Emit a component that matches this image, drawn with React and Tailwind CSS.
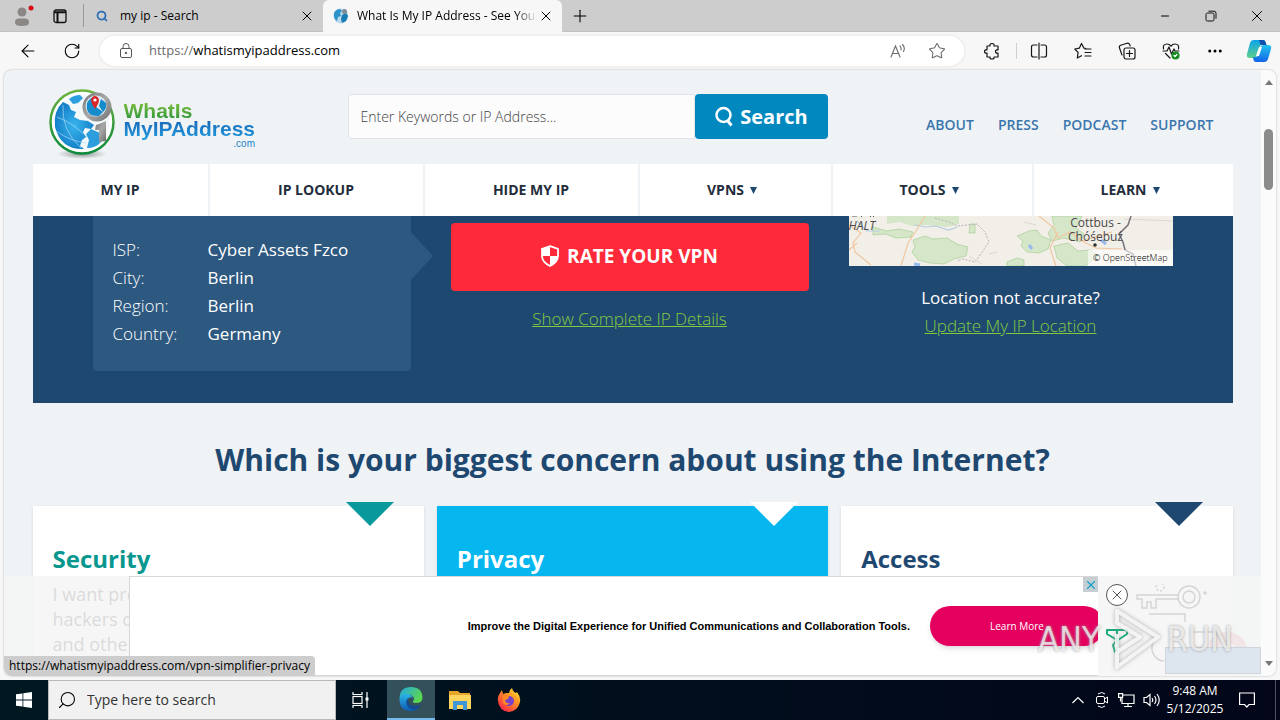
import {
  ArrowLeft,
  RotateCw,
  Star,
  Plus,
  X,
  Minus,
  MoreHorizontal,
  Search,
} from "lucide-react";

const navItems = [
  { label: "MY IP" },
  { label: "IP LOOKUP" },
  { label: "HIDE MY IP" },
  { label: "VPNS", menu: true },
  { label: "TOOLS", menu: true },
  { label: "LEARN", menu: true },
];

const ipDetails = [
  ["ISP:", "Cyber Assets Fzco"],
  ["City:", "Berlin"],
  ["Region:", "Berlin"],
  ["Country:", "Germany"],
];

const cards = [
  { title: "Security", card: "bg-white", text: "text-[#07978f]", arrow: "fill-[#07999b]", lines: ["I want pro", "hackers on", "and other"] },
  { title: "Privacy", card: "bg-[#05b6ef]", text: "text-white", arrow: "fill-white", lines: [] },
  { title: "Access", card: "bg-white", text: "text-[#1f4871]", arrow: "fill-[#1f4871]", lines: [] },
];

function GlobeIcon({ className }) {
  return (
    <svg className={className} viewBox="0 0 16 16">
      <circle cx="8" cy="8" r="7.5" fill="#b9d9ec" />
      <path d="M1 5 Q3 1 7 1 L9 3 7 5 8 8 5 9 4 13 Q0 10 1 5Z" fill="#2b93c9" />
      <path d="M9 7 L13 5 15 8 13 13 9 15 8 11Z" fill="#187bb4" />
      <circle cx="11.5" cy="3.5" r="2.5" fill="#7b8d97" />
    </svg>
  );
}

// ---------- Browser chrome ----------

function TabBar() {
  return (
    <div className="h-8 shrink-0 bg-[#cdcdcd] border-b border-[#c2c2c2] flex items-stretch">
      <button aria-label="Profile" className="w-11 flex items-center justify-center">
        <svg className="w-7 h-7" viewBox="0 0 28 28">
          <circle cx="14" cy="10" r="4.5" fill="#8b8784" />
          <path d="M7 20.500q0-4 4-4h6q4 0 4 4 0 3.500-7 3.500t-7-3.500Z" fill="#8b8784" />
          <circle cx="23" cy="6" r="2.500" fill="#d90a12" />
        </svg>
      </button>
      <button aria-label="Tab actions" className="w-8 flex items-center justify-center">
        <svg className="w-4 h-4" viewBox="0 0 16 16" fill="none" stroke="#111" strokeWidth="1.300">
          <rect x="2" y="2" width="12" height="12.500" rx="2" />
          <path d="M2 4.200h12M5.500 5v9" strokeWidth="2" />
        </svg>
      </button>
      <div className="w-60 my-1 ml-[7px] border-l border-[#999] flex items-center pl-2">
        <Search className="w-3 h-3 mx-1 text-[#2a6db5]" strokeWidth={3.5} />
        <span className="flex-1 pl-2 text-xs">my ip - Search</span>
        <button aria-label="Close tab" className="pr-2"><X className="w-4 h-4" strokeWidth={1.5} /></button>
      </div>
      <div className="w-[239px] -mb-px bg-[#f7f7f7] rounded-t-md flex items-center pl-1.5">
        <GlobeIcon className="w-4 h-4 ml-1 shrink-0" />
        <span className="flex-1 ml-2 text-xs whitespace-nowrap overflow-hidden [mask-image:linear-gradient(to_right,black_88%,transparent)]">
          What Is My IP Address - See Your
        </span>
        <button aria-label="Close tab" className="pl-px pr-2"><X className="w-4 h-4" strokeWidth={1.5} /></button>
      </div>
      <button aria-label="New tab" className="w-9 flex items-center justify-center">
        <Plus className="w-5 h-5" strokeWidth={1.3} />
      </button>
      <div className="ml-auto flex">
        <button aria-label="Minimize" className="w-[46px] flex items-center justify-center"><Minus className="w-3 h-3" strokeWidth={2} /></button>
        <button aria-label="Restore" className="w-[46px] flex items-center justify-center">
          <svg className="w-3 h-3" viewBox="0 0 12 12" fill="none" stroke="#111">
            <rect x="1" y="3" width="8" height="8" rx="1.500" />
            <path d="M3.500 1.200h5.500q2 0 2 2v5.500" />
          </svg>
        </button>
        <button aria-label="Close" className="w-[46px] flex items-center justify-center"><X className="w-[18px] h-[18px]" strokeWidth={1.3} /></button>
      </div>
    </div>
  );
}

function ToolIcon({ label, children }) {
  return (
    <button aria-label={label} className="w-11 flex items-center justify-center">
      <svg className="w-[18px] h-[18px]" viewBox="0 0 18 18" fill="none" stroke="#161616" strokeWidth="1.200" strokeLinecap="round" strokeLinejoin="round">
        {children}
      </svg>
    </button>
  );
}

function Toolbar() {
  return (
    <div className="h-[38px] shrink-0 flex items-stretch pl-1.5">
      <button aria-label="Back" className="w-11 flex items-center justify-center"><ArrowLeft className="w-5 h-5" strokeWidth={1.3} /></button>
      <button aria-label="Refresh" className="w-11 flex items-center justify-center"><RotateCw className="w-[18px] h-[18px]" strokeWidth={1.5} /></button>
      <div className="flex-1 my-1 ml-1.5 px-[18px] bg-white rounded-full ring-2 ring-[#f0f0f0] flex items-center">
        <svg className="w-4 h-4 shrink-0" viewBox="0 0 16 16" fill="none" stroke="#555">
          <rect x="2.500" y="5.500" width="11" height="9" rx="1.500" />
          <path d="M5 5.500V3.500a3 3 0 0 1 6 0v2" />
          <circle cx="8" cy="10" r=".8" fill="#555" />
        </svg>
        <div className="flex-1 ml-[15px] flex items-center text-[13px]">
          <span className="text-[#6b6b6b]">https://</span>
          <input aria-label="Address" defaultValue="whatismyipaddress.com" className="flex-1 outline-none text-black" />
        </div>
        <button aria-label="Read aloud" className="mr-[22px]">
          <svg className="w-4 h-4" viewBox="0 0 16 16" fill="none" stroke="#6a6a6a" strokeWidth="1.100" strokeLinecap="round">
            <path d="M1 14L5.500 3 10 14M2.500 10.500h6M10 3q1.500 1.500 1 4M12.500 1.500q3 3 1 7" />
          </svg>
        </button>
        <button aria-label="Add to favorites"><Star className="w-[18px] h-[18px] text-[#6a6a6a]" strokeWidth={1.4} /></button>
      </div>
      <div className="flex ml-1.5">
        <ToolIcon label="Extensions">
          <path d="M4 4h3q-.5-2.500 2-2.500T11 4h4v4q-2.500-.5-2.500 1.500t2.500 1.500v4h-4q.5 2-2 2t-2-2H4v-4q-2.500.5-2.500-1.500T4 8Z" />
        </ToolIcon>
        <div className="w-px h-4 my-auto ml-0.5 bg-[#cfcfcf]" />
        <ToolIcon label="Split screen">
          <path d="M7 3H3.500Q1.500 3 1.500 5v8q0 2 2 2H7M11 3h3.500q2 0 2 2v8q0 2-2 2H11M9 1v16" />
        </ToolIcon>
        <ToolIcon label="Favorites">
          <path d="M12 6.500l-2-.3L7.500 1.500 5.300 6.200.8 7l3.300 3.400L3.300 16l4.200-2.300M11 7h6M11 10.500h6M11 14h6" />
        </ToolIcon>
        <ToolIcon label="Collections">
          <rect x="6" y="6" width="11" height="11" rx="2" />
          <path d="M11.500 8.500v6M8.500 11.500h6M4 13L1.500 6q-.7-2 1.200-2.800L9 1.300q2-.5 2.700 1.300l.5 1.400" />
        </ToolIcon>
        <ToolIcon label="Browser essentials">
          <path d="M1.500 7Q.500 2 5 2q2.500 0 4 2.200Q10.500 2 13 2q4.500 0 3.500 5M1 9h4l2-4 2.500 7L12 7l1 2h4M3.500 11.500L8 16" />
          <circle cx="13.500" cy="13.500" r="3.500" fill="#168b22" stroke="#168b22" />
          <path d="M12 13.500l1 1 2-2" stroke="white" />
        </ToolIcon>
        <button aria-label="Menu" className="w-11 flex items-center justify-center"><MoreHorizontal className="w-[18px] h-[18px]" strokeWidth={2} /></button>
        <button aria-label="Copilot" className="w-[43px] flex items-center justify-center">
          <svg className="w-7 h-7" viewBox="0 0 28 28">
            <defs>
              <linearGradient id="cpA" x1="0" y1="0" x2="0" y2="1"><stop offset="0" stopColor="#0aa3ea" /><stop offset="1" stopColor="#5fd08a" /></linearGradient>
              <linearGradient id="cpB" x1="0" y1="0" x2="0" y2="1"><stop offset="0" stopColor="#22c3f0" /><stop offset="1" stopColor="#1464e8" /></linearGradient>
            </defs>
            <path d="M9 3h9q2 0 2.500 2l1 3h-6l-3 10q-1 3-4 3H5q-4 0-3-4L5 6q1-3 4-3Z" fill="url(#cpA)" />
            <path d="M14 3h4q2 0 2.500 2l1 3h-6Z" fill="#134fae" />
            <path d="M19 25h-8q-2 0-2.500-2L8 20h4l3-9q1-3 4-3h4q4 0 3 4l-3 10q-1 3-4 3Z" fill="url(#cpB)" />
            <path d="M14 10h3l-3 9h-3Z" fill="white" />
          </svg>
        </button>
      </div>
    </div>
  );
}

// ---------- Web page ----------

function Logo() {
  return (
    <a href="#home" className="flex items-start pl-3.5 pt-[17px] font-['Liberation_Sans']">
      <svg className="w-[72px] h-[74px]" viewBox="0 0 72 74">
        <defs>
          <linearGradient id="ring" x1="0" y1="0" x2="0" y2="1"><stop offset="0" stopColor="#6cb33f" /><stop offset="1" stopColor="#0c8a3c" /></linearGradient>
          <radialGradient id="sea"><stop offset="0" stopColor="#38b5ee" /><stop offset="1" stopColor="#1580c9" /></radialGradient>
          <linearGradient id="metal" x1="0" y1="0" x2="1" y2="1"><stop offset="0" stopColor="#777" /><stop offset=".5" stopColor="#a9a9a9" /><stop offset="1" stopColor="#6d6d6d" /></linearGradient>
          <radialGradient id="shade"><stop offset="0" stopColor="#8e9696" /><stop offset="1" stopColor="#8e9696" stopOpacity="0" /></radialGradient>
        </defs>
        <ellipse cx="35" cy="67" rx="25" ry="5" fill="url(#shade)" />
        <circle cx="35" cy="35" r="31.500" fill="white" stroke="url(#ring)" strokeWidth="2.500" />
        <circle cx="35" cy="35" r="27.500" fill="#f3f8fb" />
        {/* North America down to the gulf, then South America */}
        <path d="M8 40Q6 24 16 15l6 3 2 5 5 2-2 5 6 3 8 1 6 4-3 4-6-1-2 4 3 5-4 3-2 6 4 3Q14 63 8 40Z" fill="url(#sea)" />
        <path d="M22 12q5-4 11-4l3 3-5 5-5 1ZM40 61l2-8-3-6 5-5 9 4 1 9q-5 6-14 6Z" fill="#2d9edd" />
        <path d="M10 30q16 6 30 20M16 18q-2 25 18 43M9 44q14 10 30 12" fill="none" stroke="#a9d9f3" strokeWidth=".7" />
        <path d="M52 37l7-3v20l-7 1V43h-4l1-5Z" fill="url(#metal)" />
        <circle cx="50" cy="20" r="14.500" fill="url(#metal)" />
        <circle cx="49" cy="19" r="10.500" fill="#dceaf2" />
        <path d="M40 16q3-6 8-6l3 5-3 4 8 6-4 4Q38 30 40 16ZM54 12l5 4q1 6-3 9l-4-6Z" fill="#178ccc" />
        <path d="M48 22Q44 16 44 13q1-4 4-4t4 4q0 3-4 9Z" fill="#d9262b" />
        <circle cx="48" cy="13" r="1.600" fill="white" />
      </svg>
      <span className="pt-4 pl-[5px] font-bold flex flex-col">
        <span className="text-[21px] leading-4 text-transparent bg-clip-text bg-linear-to-b from-[#79bd3c] to-[#2c983c]">WhatIs</span>
        <span className="text-[21px] leading-5 pb-[3px] text-transparent bg-clip-text bg-linear-to-b from-[#1b65b5] to-[#22a3e4]">MyIPAddress</span>
        <span className="text-[10px] leading-[3px] font-normal text-[#1d84c9] text-right">.com</span>
      </span>
    </a>
  );
}

function SiteHeader() {
  return (
    <header className="grid grid-cols-[315fr_480fr_405fr] h-[94px]">
      <Logo />
      <form className="flex h-[45px] mt-6" onSubmit={(e) => e.preventDefault()}>
        <input
          aria-label="Enter Keywords or IP Address"
          placeholder="Enter Keywords or IP Address..."
          className="flex-1 min-w-0 bg-[#fcfcfc] border border-[#e0e4e8] rounded-l-sm px-3 text-sm font-light outline-none placeholder:text-[#444]"
        />
        <button className="w-[133px] bg-[#0088bf] rounded-sm text-white font-bold text-xl flex items-center justify-center gap-1.5">
          <svg className="w-5 h-[22px]" viewBox="0 0 20 22" fill="none" stroke="white" strokeWidth="2.500">
            <circle cx="9.500" cy="9" r="7" />
            <path d="M13.500 14.500l4 5" strokeWidth="3" />
          </svg>
          Search
        </button>
      </form>
      <div className="flex justify-end gap-6 pr-[19px] pt-11 text-sm leading-[22px] font-semibold text-[#3a76ae]">
        <a href="#about">ABOUT</a>
        <a href="#press">PRESS</a>
        <a href="#podcast">PODCAST</a>
        <a href="#support">SUPPORT</a>
      </div>
    </header>
  );
}

function MapPreview() {
  return (
    <div className="relative h-[50px] overflow-hidden bg-[#f2efe9] text-[#4a4a4a]">
      <svg className="w-full h-full" viewBox="0 0 324 50" preserveAspectRatio="xMidYMid slice" fill="none">
        <path d="M38 0h72v8l-12 3-20-2-15 1-12-4-13 2Z" fill="#d6e6c8" />
        <path d="M64 24l12-4 8 3 14-1 10 6 11 3-2 9-12 3-10 5-14-1-12-3-6-8 3-5ZM168 20l12-5 8-1 4 6 10 4-3 9-9 4-12-1-6-6 2-5ZM203 0l30 0-6 12 8 6-4 8-16-4-12 3-4-8 6-8ZM205 30l14-3 10 8 12-1 9 6-14 10h-18l-10-8Z" fill="#d6e6c8" stroke="#a9cf98" strokeWidth=".7" />
        <path d="M24 11l14 4 12-2 14 3-2 5-15 1-10-4-13 1ZM121 8h5v9h-6ZM158 46l10-4 7 2v6h-17Z" fill="#d6e6c8" stroke="#9cca8c" strokeWidth=".6" />
        <path d="M86 2l14 4 8 4 20-2 8 8 4 10-6 9-8 11-12-3-6 2" stroke="#b5b0be" strokeDasharray="2 1.500" />
        <path d="M65 9l12 2 9-1 14 4 8-3M8 5l10 10 13 0" stroke="#b5cde1" strokeWidth="1.200" />
        <path d="M76 0L67 15 59 27 52 50M0 9l12 8-8 10 2 9L22 49M8 27L0 34M190 0l15 12 4 10 12-6 12 9 14 7 26 1M209 16l-8 16 6 18M233 25l30-9" stroke="#f0c6a0" strokeWidth="1.200" />
        <path d="M140 38l8-2M175 6l12 3M275 3l49 2M120 40l13 8" stroke="#ddd7d1" />
        <path d="M282 0l-3 9-9 9 4 8 2 8 8 4 3 12" stroke="#77737b" strokeWidth="1.500" />
        <path d="M252 24l5 4M65 48l6 1M180 29l3 4" stroke="#97b9ee" strokeWidth="3" />
        <circle cx="246" cy="29" r="1.800" fill="#333" />
        {/* lower edge of the label above HALT */}
        <path d="M3 0h5M12 0l1 1M21 0l1 1M25 0l-1 1" stroke="#555" />
      </svg>
      <span className="absolute left-0 top-1 text-xs leading-3 italic font-medium">HALT</span>
      <span className="absolute right-[46px] top-0 w-[62px] text-xs leading-[14px] text-center font-medium whitespace-nowrap">
        Cottbus -<br />Chóśebuź
      </span>
      <a href="#osm" className="absolute right-0 bottom-0 bg-white/60 px-[5px] text-[9px] leading-4 text-black">© OpenStreetMap</a>
    </div>
  );
}

function IpPanel() {
  return (
    <section className="h-[187px] px-[60px] grid grid-cols-[318fr_358fr_324fr] gap-10 items-start bg-[#1f4871] text-white font-light">
      <div className="relative h-[155px] bg-[#2d587f] rounded-b-sm pt-5 px-5">
        <dl className="grid grid-cols-[95px_1fr] leading-7 text-[17px]">
          {ipDetails.map(([label, value]) => (
            <div key={label} className="contents">
              <dt>{label}</dt>
              <dd className="font-normal">{value}</dd>
            </div>
          ))}
        </dl>
        <svg className="absolute -right-[22px] top-4 w-[22px] h-12 fill-[#2d587f]" viewBox="0 0 22 48"><path d="M0 0v48l22-24Z" /></svg>
      </div>
      <div className="pt-[7px] text-center">
        <button className="w-full h-[68px] pb-0.5 bg-[#ff2a39] rounded-sm text-[19px] font-bold flex items-center justify-center gap-2">
          <svg className="w-[18px] h-[22px]" viewBox="0 0 18 22">
            <path d="M9 1.200L17 4v7q0 6-8 10-8-4-8-10V4Z" fill="none" stroke="white" strokeWidth="1.800" />
            <path d="M9 1L1 4v7h8ZM9 11h8q0 6-8 10Z" fill="white" />
          </svg>
          RATE YOUR VPN
        </button>
        <a href="#details" className="inline-block mt-3.5 leading-7 text-[17px] text-[#82cb40] underline">Show Complete IP Details</a>
      </div>
      <div>
        <MapPreview />
        <div className="pt-[18px] text-center leading-7 text-[17px]">
          <p className="font-normal">Location not accurate?</p>
          <a href="#location" className="text-[#82cb40] underline">Update My IP Location</a>
        </div>
      </div>
    </section>
  );
}

function ConcernCards() {
  return (
    <section>
      <h2 className="h-[103px] pt-9 text-center text-3xl leading-[42px] font-bold text-[#1f4871]">
        Which is your biggest concern about using the Internet?
      </h2>
      <div className="grid grid-cols-3 gap-[13px]">
        {cards.map((c) => (
          <article key={c.title} className={`relative h-60 px-5 pt-[37px] shadow-sm ${c.card}`}>
            <svg className={`absolute right-[30px] -top-1 w-12 h-6 ${c.arrow}`} viewBox="0 0 48 24"><path d="M0 0h48L24 24Z" /></svg>
            <h3 className={`text-2xl leading-8 font-bold ${c.text}`}>{c.title}</h3>
            <p className="pt-[7px] text-lg leading-[25px] font-normal text-[#444]">
              {c.lines.map((line) => <span key={line} className="block">{line}</span>)}
            </p>
          </article>
        ))}
      </div>
    </section>
  );
}

function Watermark() {
  return (
    <div className="absolute right-7 bottom-0.5 flex items-center gap-1 text-[34px] leading-none text-white/70 font-['Liberation_Sans_Narrow','DejaVu_Sans_Condensed',sans-serif] [text-shadow:0_0_3px_#999] pointer-events-none">
      <span>ANY</span>
      <svg className="w-[58px] h-[70px] drop-shadow-[0_0_2px_#999]" viewBox="0 0 58 70" fill="none" stroke="white" strokeOpacity=".8" strokeWidth="4" strokeLinejoin="round">
        <path d="M13 7L54 33 13 63V48l23-15L13 19Z" />
        <path d="M13 30v16" />
      </svg>
      <span>RUN</span>
    </div>
  );
}

function AdBanner() {
  return (
    <aside className="absolute inset-x-0 bottom-0 h-[100px] grid grid-cols-[125px_1fr_163px] bg-[#f5f5f5]/85">
      <div />
      <div className="relative bg-white border-l border-y border-[#d8d8d8] flex items-center justify-end overflow-hidden">
        <p className="font-['Liberation_Sans'] text-[11px] font-bold text-black whitespace-nowrap mr-5">
          Improve the Digital Experience for Unified Communications and Collaboration Tools.
        </p>
        <button className="w-[174px] h-10 -mr-1.5 rounded-full bg-[#e5005f] text-white text-[10px] shadow-md">Learn More</button>
        <button aria-label="Close ad" className="absolute right-0 top-0 w-[15px] h-[15px] bg-[#c5ced3] flex items-center justify-center">
          <X className="w-3.5 h-3.5 text-[#12a2c9]" strokeWidth={2} />
        </button>
      </div>
      <div className="relative">
        <div className="flex flex-col items-start pl-2 pt-2 gap-[22px]">
          <button aria-label="Hide banner" className="w-[22px] h-[22px] rounded-full border border-[#555] bg-white flex items-center justify-center">
            <X className="w-4 h-4 text-[#555]" strokeWidth={1.5} />
          </button>
          <svg className="w-[22px] h-[26px]" viewBox="0 0 22 26" fill="none" stroke="#19ac79" strokeWidth="2" strokeLinejoin="round">
            <path d="M1 2h20v4L12 12v6L9 24 7 17l4-5L1 6ZM11 2v10" />
          </svg>
        </div>
        <svg className="absolute left-9 top-2 w-[90px] h-[90px]" viewBox="0 0 90 90" fill="none" stroke="#d3d5d7" strokeWidth="1.500">
          <circle cx="55" cy="13" r="11" />
          <circle cx="55" cy="13" r="6" />
          <path d="M44 11H3v4h5v9h5v-6h4v6h5v-9h22M15 30h36v8" />
          <circle cx="26" cy="3" r="4" strokeDasharray="2 2" />
          <circle cx="71" cy="9" r="1" />
          <path d="M20 57a13 13 0 0 0 10 20M58 48h24v10" />
        </svg>
        <svg className="absolute right-3 top-[54px] w-11 h-5" viewBox="0 0 44 20"><path d="M2 20a20 18 0 0 1 40 0H30a8 8 0 0 0-16 0Z" fill="#f3e6e8" /></svg>
        <div className="absolute right-0 bottom-0.5 w-24 h-[27px] bg-[#dde5ef] border border-[#cfd5dc]" />
      </div>
      <Watermark />
    </aside>
  );
}

function Scrollbar() {
  return (
    <div className="w-[15px] shrink-0 bg-[#fbfbfb] flex flex-col items-center pt-2.5 pb-2.5">
      <svg className="w-2 h-[5px] fill-[#777]" viewBox="0 0 8 5"><path d="M0 5h8L4 0Z" /></svg>
      <div className="w-[9px] h-[61px] mt-11 rounded-full bg-[#8b8b8b]" />
      <svg className="w-2 h-[5px] mt-auto fill-[#777]" viewBox="0 0 8 5"><path d="M0 0h8L4 5Z" /></svg>
    </div>
  );
}

// ---------- Windows taskbar ----------

function Taskbar() {
  return (
    <footer className="h-10 shrink-0 flex items-stretch bg-linear-to-r from-[#001822] to-[#020618] text-white">
      <button aria-label="Start" className="w-12 flex items-center justify-center">
        <svg className="w-4 h-4 fill-white" viewBox="0 0 16 16"><path d="M0 2.300L6.500 1.400v6.200H0ZM7.300 1.300L16 0v7.600H7.300ZM0 8.400h6.500v6.200L0 13.700ZM7.300 8.400H16V16l-8.700-1.300Z" /></svg>
      </button>
      <div className="w-72 bg-[#f1f1f1] border border-[#b9b9b9] flex items-center px-2 gap-2.5 text-black">
        <Search className="w-5 h-5 shrink-0 -scale-x-100" strokeWidth={1.3} />
        <input aria-label="Type here to search" placeholder="Type here to search" className="flex-1 min-w-0 outline-none text-sm placeholder:text-[#333]" />
      </div>
      <button aria-label="Task view" className="w-[51px] flex items-center justify-center pr-1">
        <svg className="w-[18px] h-[18px]" viewBox="0 0 18 18" fill="none" stroke="white" strokeWidth="1.200">
          <path d="M2 1v2.500h9V1M2 17v-2.500h9V17M16 1v16" />
          <rect x="2" y="5.500" width="9" height="7" />
          <path d="M14.500 6.500h3v3h-3Z" fill="white" stroke="none" />
        </svg>
      </button>
      <button aria-label="Edge" className="w-12 bg-[#34505a] border-b-2 border-[#76b9ed] flex items-center justify-center">
        <svg className="w-6 h-6" viewBox="0 0 24 24">
          <defs>
            <linearGradient id="edA" x1="0" y1="0" x2="1" y2=".5"><stop offset="0" stopColor="#22a7e6" /><stop offset="1" stopColor="#5bd74e" /></linearGradient>
            <linearGradient id="edB" x1="0" y1="0" x2="0" y2="1"><stop offset="0" stopColor="#2bb7e5" /><stop offset="1" stopColor="#0d5cb4" /></linearGradient>
          </defs>
          <path d="M.5 11Q1 0 12 0t11.500 10.500Q23.500 16 17 16q-4 0-3-2 2-2 0-4.500Q9 4 .5 11Z" fill="url(#edA)" />
          <path d="M.5 11Q2 6 8 6.500q4.500.5 6 4-4.500-1.500-5.500 3Q8 20 15 20q3 0 6-2-3 6-9 6Q0 24 .5 11Z" fill="url(#edB)" />
          <path d="M9 11q-4 5 1 10 4 3 8 1 2-1 4-4.500-3 2-6.500 1.500Q8 18 9 11Z" fill="#124b92" />
        </svg>
      </button>
      <button aria-label="File Explorer" className="w-[49px] flex items-center justify-center">
        <svg className="w-[22px] h-5" viewBox="0 0 22 20">
          <path d="M0 1h9l2 2h10v4H0Z" fill="#e7a52b" />
          <path d="M0 5h22v14H0Z" fill="#fcd55f" />
          <path d="M4 11h14v9h-4v-5H8v5H4Z" fill="#3f95d5" />
        </svg>
      </button>
      <button aria-label="Firefox" className="w-[50px] flex items-center justify-center">
        <svg className="w-6 h-6" viewBox="0 0 24 24">
          <defs>
            <linearGradient id="ff" x1="1" y1="0" x2=".2" y2="1"><stop offset="0" stopColor="#fff34a" /><stop offset=".4" stopColor="#ff9a20" /><stop offset="1" stopColor="#f5204c" /></linearGradient>
          </defs>
          <path d="M3 5l2-3 1 4 3-1 3 0Q12 2 15 0q1 4 4 5l1-1q4 5 3 10-2 9-11 10Q2 23 1 13 0 9 3 5Z" fill="url(#ff)" />
          <circle cx="12" cy="13" r="5" fill="#7742c6" />
          <path d="M6 8l6 0-1 3-3 1q1 4 5 3-4 4-7 0Z" fill="#ff8a24" />
        </svg>
      </button>
      <div className="ml-auto flex items-center">
        <svg className="w-3 h-2 mr-3" viewBox="0 0 12 8" fill="none" stroke="white" strokeWidth="1.200"><path d="M.5 7L6 1.500 11.500 7" /></svg>
        <svg className="w-3 h-[18px] mr-2.5" viewBox="0 0 12 18" fill="none" stroke="white">
          <rect x=".5" y="5.500" width="8" height="7" rx="1.500" />
          <path d="M8.500 8l3-2v6l-3-2M2 3q4-3 7 0M2 15q4 3 7 0" />
        </svg>
        <svg className="w-[17px] h-4 mr-2" viewBox="0 0 17 16" fill="none" stroke="white" strokeWidth="1.200">
          <path d="M5 3h11v8.500H4V6M10 11.500V14.500M6 14.500h8M.6 1.600h4v3.800h-4ZM2.500 5.500v4" />
        </svg>
        <svg className="w-[18px] h-4 mr-2" viewBox="0 0 18 16" fill="none" stroke="white" strokeWidth="1.200">
          <path d="M1 5.500h2.500L7 2.500v11l-3.500-3H1ZM9 6q1.500 2 0 4M11.500 4q3 4 0 8M14 2q4.500 6 0 12" />
        </svg>
        <div className="w-[52px] text-xs leading-[18px] text-center flex flex-col items-center">
          <span className="whitespace-nowrap">9:48 AM</span>
          <span className="whitespace-nowrap">5/12/2025</span>
        </div>
        <button aria-label="Notifications" className="ml-[18px]">
          <svg className="w-4 h-4" viewBox="0 0 16 16" fill="none" stroke="white" strokeWidth="1.200"><path d="M.6 1h14.800v11.500H10L7.800 15 5.500 12.500H.6Z" /></svg>
        </button>
        <div className="w-px h-10 ml-5 mr-1 bg-[#4d5160]" />
      </div>
    </footer>
  );
}

export default function App() {
  return (
    <div className="h-screen flex flex-col overflow-hidden bg-[#f7f7f7] font-['Open_Sans',sans-serif] text-black">
      <TabBar />
      <Toolbar />
      <main className="flex-1 min-h-0 mx-1 mb-1 flex relative rounded-lg overflow-hidden bg-[#f0f3f5] shadow-[0_0_2px_#aaa]">
        <div className="flex-1 min-w-0">
          <div className="max-w-[1200px] mx-auto">
            <SiteHeader />
            <nav className="h-[52px] grid grid-cols-[175fr_213fr_213fr_191fr_199fr_199fr] gap-0.5">
              {navItems.map((item) => (
                <a key={item.label} href="#nav" className={`bg-white flex items-center justify-center gap-1.5 text-sm font-bold text-[#232d3c] ${item.menu ? "pr-1.5" : ""}`}>
                  {item.label}
                  {item.menu && <svg className="w-[7px] h-[7px] fill-[#1f4871]" viewBox="0 0 7 7"><path d="M0 0h7L3.500 7Z" /></svg>}
                </a>
              ))}
            </nav>
            <IpPanel />
            <ConcernCards />
          </div>
        </div>
        <div className="absolute left-0 right-[15px] bottom-0">
          <AdBanner />
          <div className="absolute left-0 bottom-0 h-5 px-[5px] bg-[#cdcdcd] rounded-tr-sm text-xs leading-5 whitespace-nowrap">
            https://whatismyipaddress.com/vpn-simplifier-privacy
          </div>
        </div>
        <Scrollbar />
      </main>
      <Taskbar />
    </div>
  );
}
